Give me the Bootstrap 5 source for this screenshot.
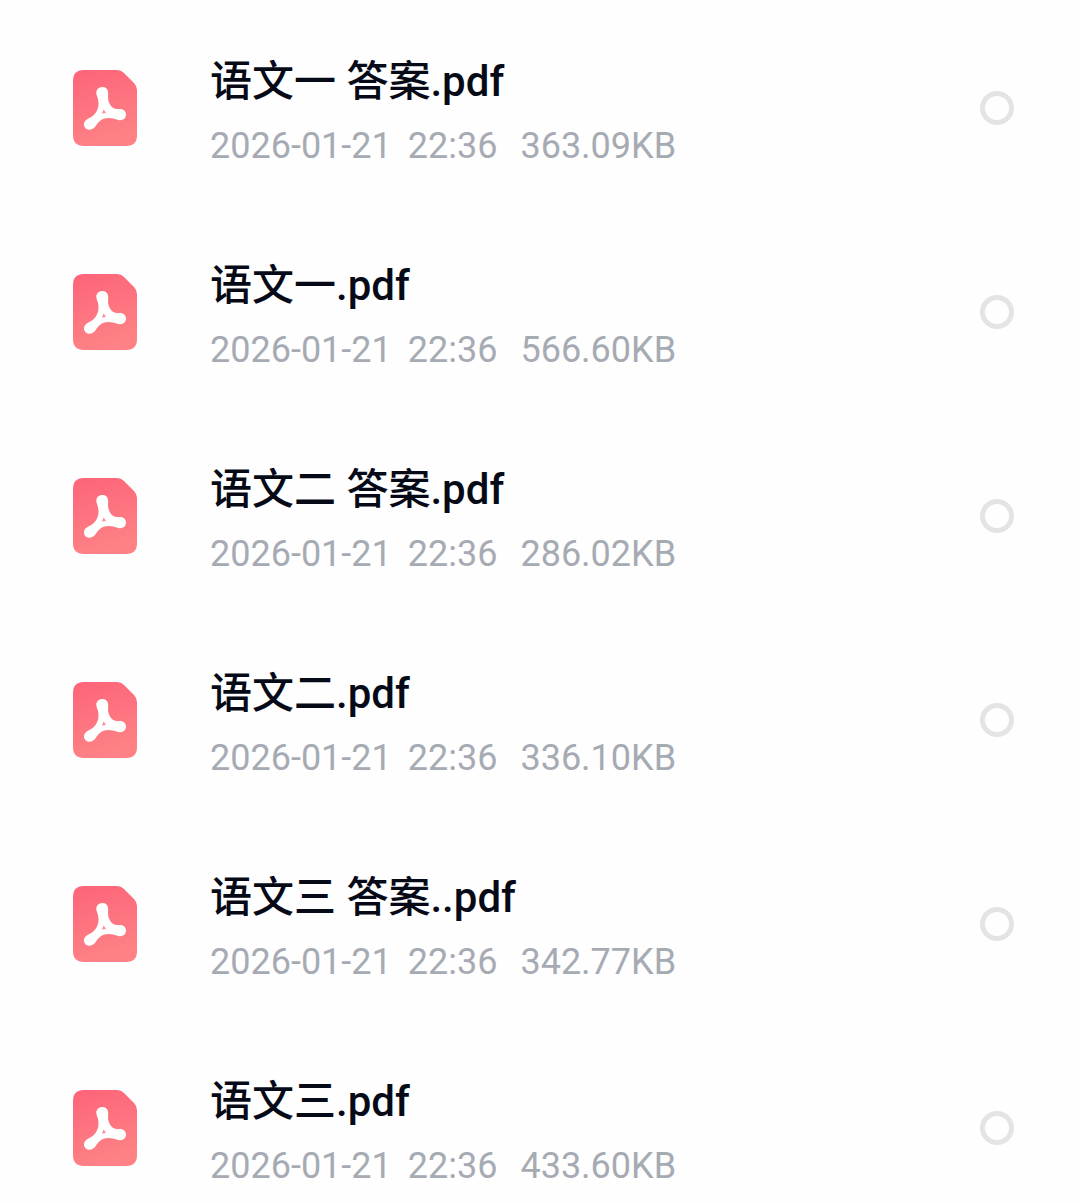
<!DOCTYPE html>
<html lang="zh-CN">
<head>
<meta charset="utf-8">
<meta name="viewport" content="width=device-width, initial-scale=1">
<title>文件列表</title>
<link href="https://cdn.jsdelivr.net/npm/bootstrap@5.3.0/dist/css/bootstrap.min.css" rel="stylesheet">
<style>
body { font-family: Roboto, "Noto Sans CJK SC", sans-serif; background: #fefefe; }
.file-list { gap: 54px; padding: 33px 66px 0 72px; }
.file-row { height: 150px; }
.file-icon { width: 66px; height: 78px; margin-right: 72px; }
.file-text { padding-top: 9px; }
.file-name { font-size: 42px; line-height: 60px; font-weight: 500; color: #060a16; }
.file-meta { font-size: 36px; line-height: 56px; color: #a6abb3; margin-top: 6px; }
.file-date { margin-right: 16px; }
.file-time { margin-right: 23px; }
.file-check.form-check-input { width: 34px; height: 34px; border: 5px solid #e4e4e5; background-color: #fefefe; }
.file-check.form-check-input:checked { background-color: #ff6478; border-color: #ff6478; }
</style>
</head>
<body>
<svg class="position-absolute" width="0" height="0" aria-hidden="true">
  <defs>
    <linearGradient id="pdfFill" x1="0" y1="0" x2="0.25" y2="1">
      <stop offset="0" stop-color="#fd6479"/><stop offset="1" stop-color="#fe8185"/>
    </linearGradient>
  </defs>
  <symbol id="pdf" viewBox="0 0 66 78">
    <path fill="url(#pdfFill)" d="M12 1H45Q49 1 52 4L62 14Q65 17 65 21V66Q65 77 54 77H12Q1 77 1 66V12Q1 1 12 1Z"/>
    <path fill="#fff" d="M30.500 18C34.500 18 36.500 21 36.200 25C35.800 29 36 32 38 35.500C40 39 43 40.500 47 40C51 39.500 54 42 54 45.500C54 49.500 50.500 52 46.500 51C41 49.500 37 48.200 32.500 49.500C28.500 50.700 26.500 53 24 56.500C21 61 16.500 61.800 13.800 59.500C11 57 11.500 52 15.500 50C21 47.500 24 44.500 25.600 40C27 36 26.800 31.500 25 27C23 22 25.500 18 30.500 18Z"/>
    <path fill="#fe8b92" d="M31.700 40.500L29.800 44.500L34 44Z"/>
  </symbol>
</svg>
<main class="file-list d-flex flex-column">
  <label class="file-row d-flex align-items-center">
    <svg class="file-icon flex-shrink-0" aria-hidden="true"><use href="#pdf"/></svg>
    <span class="file-text flex-grow-1">
      <span class="file-name d-block">语文一 答案.pdf</span>
      <span class="file-meta d-flex"><span class="file-date">2026-01-21</span><span class="file-time">22:36</span><span>363.09KB</span></span>
    </span>
    <input class="file-check form-check-input rounded-circle flex-shrink-0 m-0" type="checkbox">
  </label>
  <label class="file-row d-flex align-items-center">
    <svg class="file-icon flex-shrink-0" aria-hidden="true"><use href="#pdf"/></svg>
    <span class="file-text flex-grow-1">
      <span class="file-name d-block">语文一.pdf</span>
      <span class="file-meta d-flex"><span class="file-date">2026-01-21</span><span class="file-time">22:36</span><span>566.60KB</span></span>
    </span>
    <input class="file-check form-check-input rounded-circle flex-shrink-0 m-0" type="checkbox">
  </label>
  <label class="file-row d-flex align-items-center">
    <svg class="file-icon flex-shrink-0" aria-hidden="true"><use href="#pdf"/></svg>
    <span class="file-text flex-grow-1">
      <span class="file-name d-block">语文二 答案.pdf</span>
      <span class="file-meta d-flex"><span class="file-date">2026-01-21</span><span class="file-time">22:36</span><span>286.02KB</span></span>
    </span>
    <input class="file-check form-check-input rounded-circle flex-shrink-0 m-0" type="checkbox">
  </label>
  <label class="file-row d-flex align-items-center">
    <svg class="file-icon flex-shrink-0" aria-hidden="true"><use href="#pdf"/></svg>
    <span class="file-text flex-grow-1">
      <span class="file-name d-block">语文二.pdf</span>
      <span class="file-meta d-flex"><span class="file-date">2026-01-21</span><span class="file-time">22:36</span><span>336.10KB</span></span>
    </span>
    <input class="file-check form-check-input rounded-circle flex-shrink-0 m-0" type="checkbox">
  </label>
  <label class="file-row d-flex align-items-center">
    <svg class="file-icon flex-shrink-0" aria-hidden="true"><use href="#pdf"/></svg>
    <span class="file-text flex-grow-1">
      <span class="file-name d-block">语文三 答案..pdf</span>
      <span class="file-meta d-flex"><span class="file-date">2026-01-21</span><span class="file-time">22:36</span><span>342.77KB</span></span>
    </span>
    <input class="file-check form-check-input rounded-circle flex-shrink-0 m-0" type="checkbox">
  </label>
  <label class="file-row d-flex align-items-center">
    <svg class="file-icon flex-shrink-0" aria-hidden="true"><use href="#pdf"/></svg>
    <span class="file-text flex-grow-1">
      <span class="file-name d-block">语文三.pdf</span>
      <span class="file-meta d-flex"><span class="file-date">2026-01-21</span><span class="file-time">22:36</span><span>433.60KB</span></span>
    </span>
    <input class="file-check form-check-input rounded-circle flex-shrink-0 m-0" type="checkbox">
  </label>
</main>
<script src="https://cdn.jsdelivr.net/npm/bootstrap@5.3.0/dist/js/bootstrap.bundle.min.js"></script>
</body>
</html>
